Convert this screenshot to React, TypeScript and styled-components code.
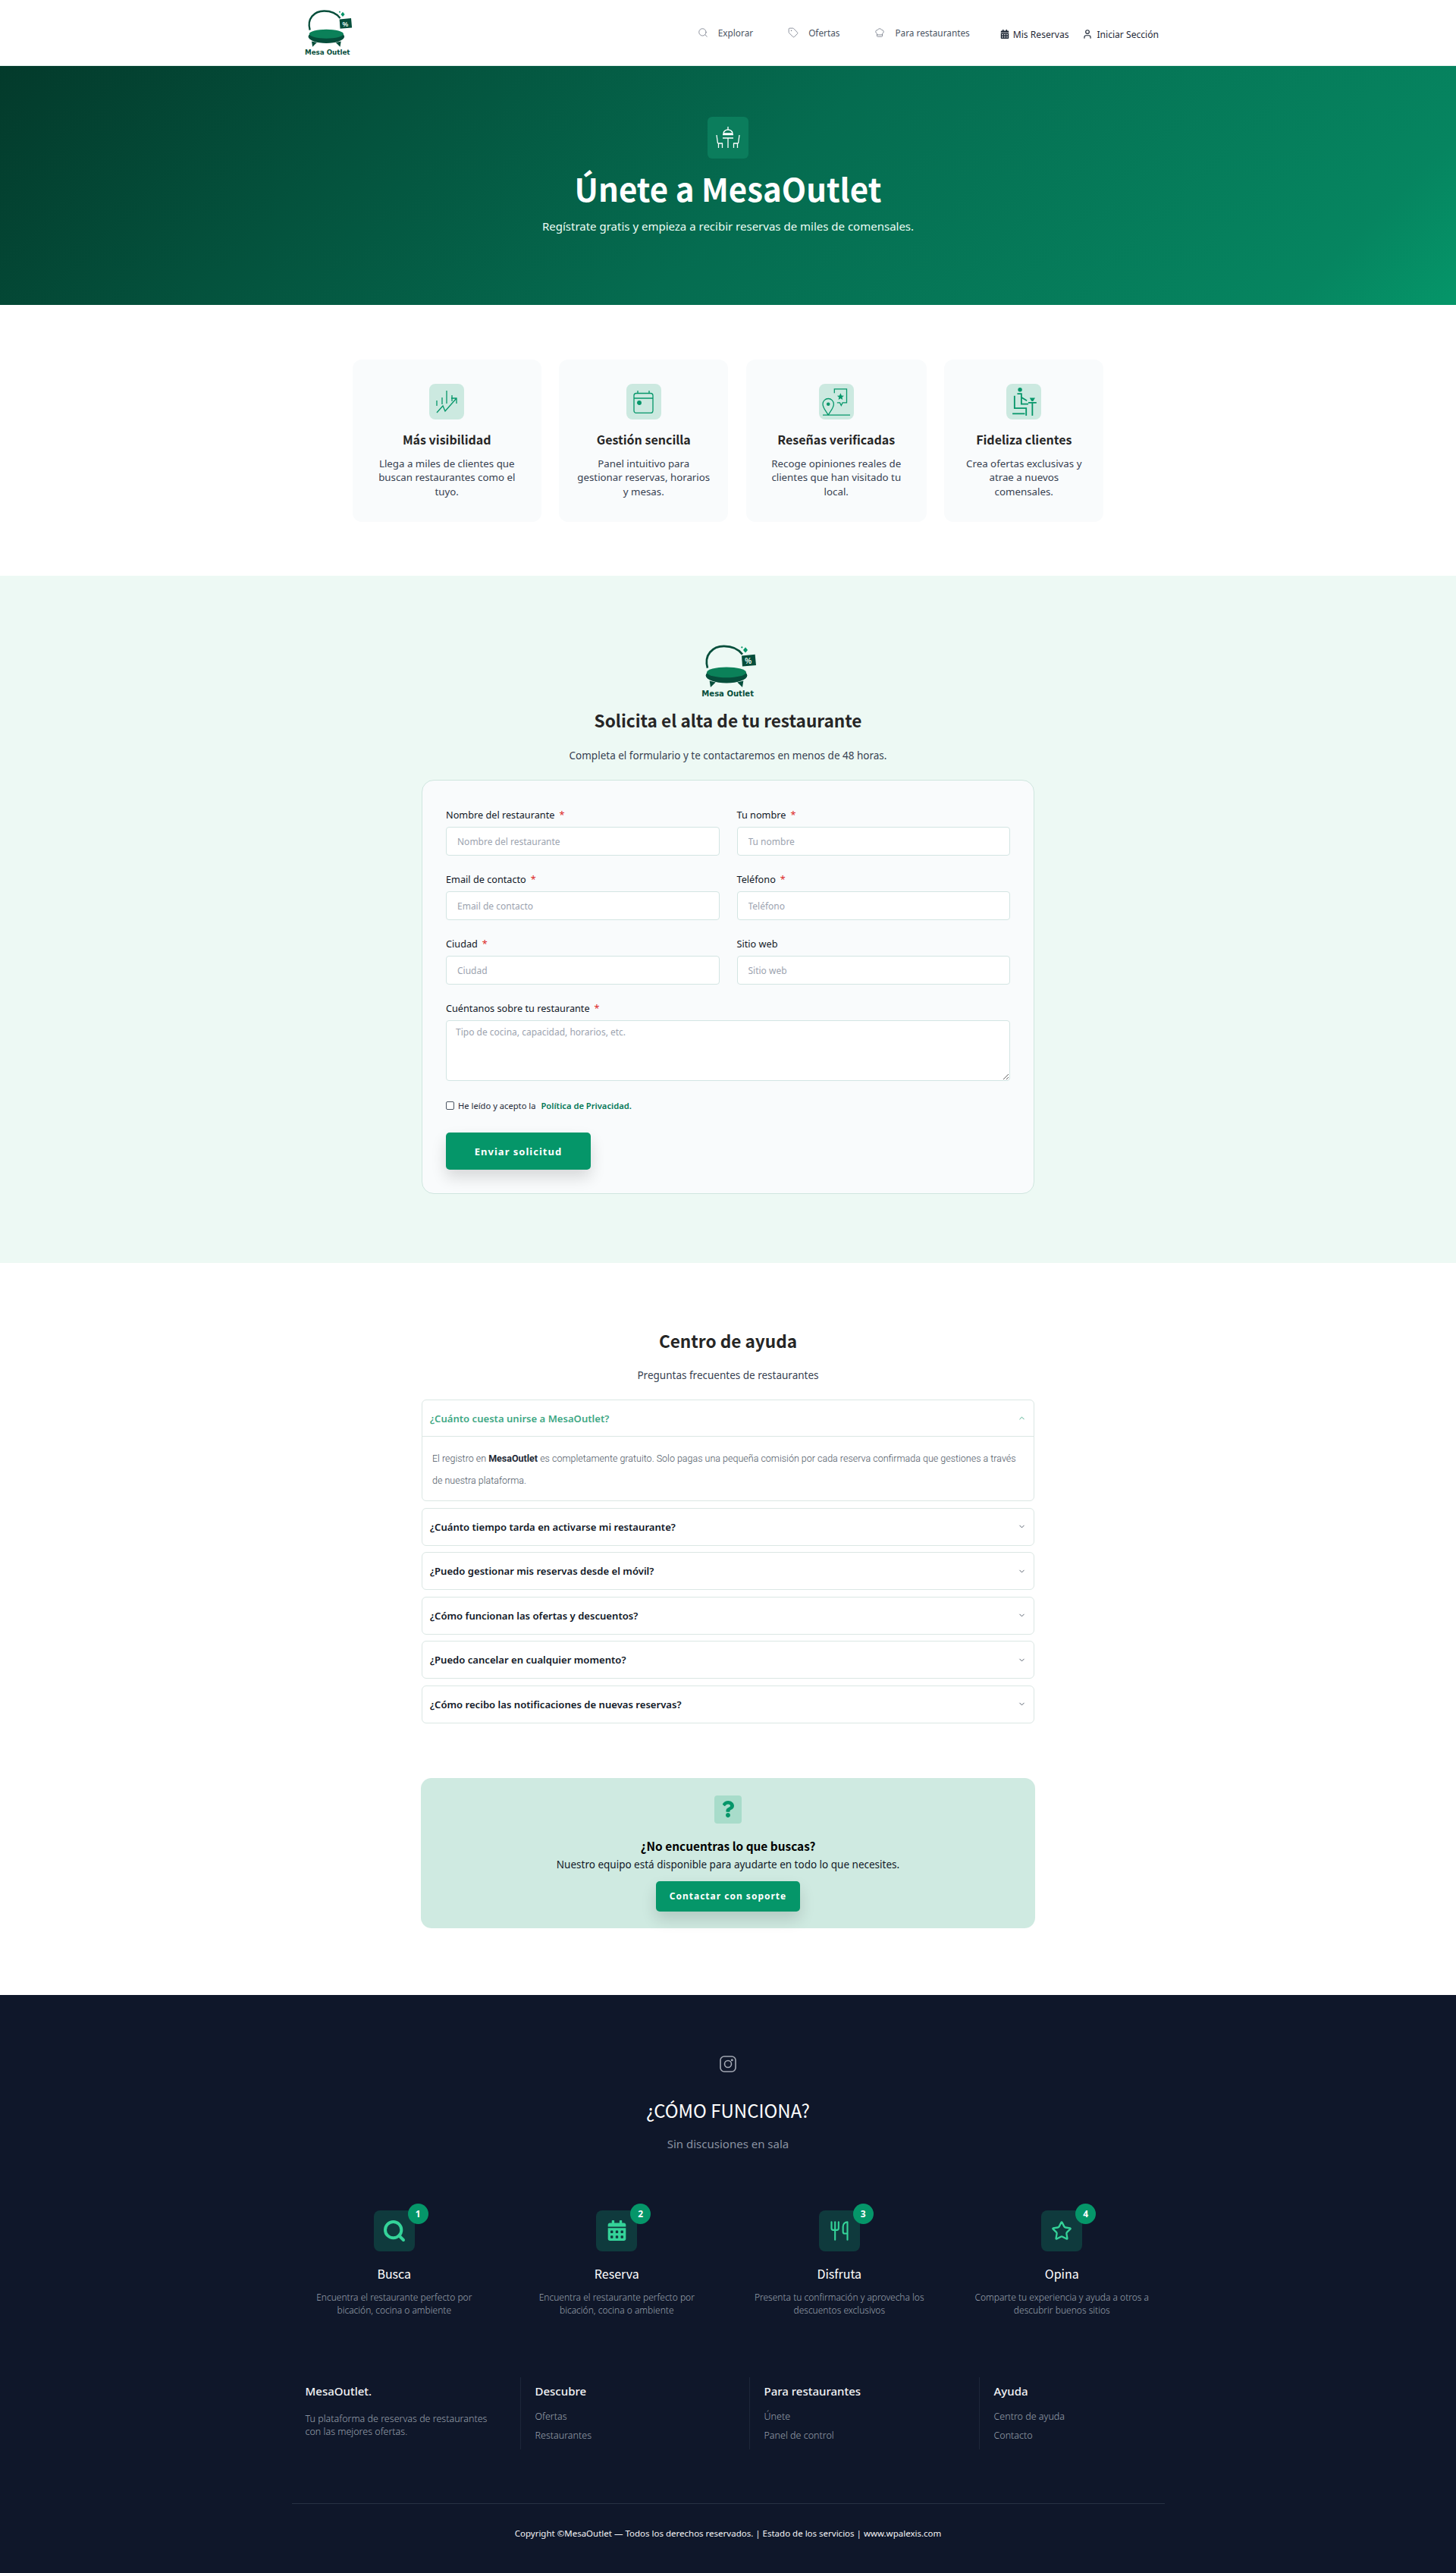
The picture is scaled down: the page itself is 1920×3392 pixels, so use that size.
import styled, { createGlobalStyle } from "styled-components";
import { Search, Tag, ChefHat, User, ChevronDown, ChevronUp, Star, Utensils } from "lucide-react";
import { FaCalendarAlt, FaQuestion } from "react-icons/fa";

const bodyFont = `"Noto Sans", "Open Sans", sans-serif`;
const headFont = `"Noto Sans CJK JP", "Noto Sans", sans-serif`;

const GlobalStyle = createGlobalStyle`
  * { box-sizing: border-box; }
  body { margin: 0; background: #fff; font-family: ${bodyFont}; color: #1f2937; }
`;

const Header = styled.header`
  height: 87px;
  border-bottom: 1px solid #e6f4ef;
  display: flex;
  justify-content: center;
`;
const HeaderInner = styled.div`
  width: 1152px;
  padding: 0 8px 0 16px;
  display: flex;
  align-items: center;
  justify-content: space-between;
`;
const Nav = styled.nav`
  display: flex;
  align-items: center;
`;
const NavLink = styled.a<{ $gap: number }>`
  display: flex;
  align-items: center;
  gap: 13px;
  margin-right: ${(p) => p.$gap}px;
  font-size: 11.8px;
  color: #4b5563;
  svg { color: #6b7280; }
`;
const NavRight = styled.a`
  display: flex;
  align-items: center;
  gap: 5px;
  margin: 4px 18px 0 0;
  font-size: 12.1px;
  color: #1f2937;
  &:last-child { margin-right: 0; }
`;

const Hero = styled.section`
  height: 315px;
  padding-top: 67px;
  background: linear-gradient(135deg, #033a2b 0%, #056c50 52%, #068560 90%, #059669 100%);
  display: flex;
  flex-direction: column;
  align-items: center;
  color: #fff;
`;
const HeroIcon = styled.div`
  width: 54px;
  height: 55px;
  border-radius: 6px;
  background: #0b7d5c;
  display: flex;
  align-items: center;
  justify-content: center;
`;
const HeroTitle = styled.h1`
  margin: 10px 0 0;
  font: 700 42px/58px ${headFont};
`;
const HeroText = styled.p`
  margin: 7px 0 0;
  font: 400 15px/28px ${bodyFont};
  color: #ecfdf5;
`;

const Features = styled.section`
  padding: 72px 0 71px;
  display: flex;
  justify-content: center;
  gap: 23.5px;
`;
const FeatureCard = styled.article<{ $w: number }>`
  width: ${(p) => p.$w}px;
  height: 214px;
  padding: 32px 24px 0;
  border-radius: 12px;
  background: #f9fbfc;
  text-align: center;
`;
const FeatureIcon = styled.div`
  width: 46px;
  height: 47px;
  margin: 0 auto;
  border-radius: 8px;
  background: #cce9e0;
  display: flex;
  align-items: center;
  justify-content: center;
`;
const FeatureTitle = styled.h3`
  margin: 13px 0 0;
  font: 700 16px/26px ${headFont};
  color: #262626;
`;
const FeatureText = styled.p`
  margin: 10px 0 0;
  font: 400 13.3px/18.4px ${bodyFont};
  color: #374151;
`;

const Apply = styled.section`
  padding: 90px 0 91px;
  background: #edf9f4;
  display: flex;
  flex-direction: column;
  align-items: center;
`;
const SectionTitle = styled.h2<{ $top: number }>`
  margin: ${(p) => p.$top}px 0 0;
  font: 700 22.6px/36px ${headFont};
  color: #262626;
`;
const SectionText = styled.p<{ $top: number }>`
  margin: ${(p) => p.$top}px 0 0;
  font: 400 13.5px/24px ${bodyFont};
  color: #374151;
`;
const FormCard = styled.form`
  width: 808px;
  margin-top: 20px;
  padding: 35px 31px 31px;
  border: 1px solid #cfe6df;
  border-radius: 16px;
  background: #f9fbfc;
`;
const FormGrid = styled.div`
  display: grid;
  grid-template-columns: 1fr 1fr;
  column-gap: 23px;
  row-gap: 21px;
`;
const Field = styled.label<{ $wide?: boolean }>`
  display: block;
  grid-column: ${(p) => (p.$wide ? "1 / -1" : "auto")};
`;
const LabelText = styled.span`
  display: block;
  margin-bottom: 6px;
  font: 400 12.7px/20px ${bodyFont};
  color: #111827;
`;
const Req = styled.span`
  margin-left: 6px;
  color: #dc2626;
`;
const Input = styled.input`
  display: block;
  width: 100%;
  height: 38px;
  padding: 0 14px;
  border: 1px solid #d3e5e3;
  border-radius: 4px;
  background: #fff;
  font: 400 12px ${bodyFont};
  &::placeholder { color: #9ca3af; }
`;
const TextArea = styled.textarea`
  display: block;
  width: 100%;
  height: 80px;
  padding: 6px 12px;
  border: 1px solid #d3e5e3;
  border-radius: 4px;
  background: #fff;
  font: 400 12px/18px ${bodyFont};
  &::placeholder { color: #9ca3af; }
`;
const Consent = styled.div`
  margin-top: 23px;
  height: 20px;
  display: flex;
  align-items: center;
  font: 400 11.2px/20px ${bodyFont};
  color: #1f2937;
`;
const Check = styled.input`
  appearance: none;
  width: 11px;
  height: 11px;
  margin: -2px 5px 0 0;
  border: 1px solid #4b5563;
  border-radius: 2px;
  background: #fff;
`;
const ConsentLink = styled.a`
  margin-left: 7px;
  font-weight: 600;
  color: #047857;
`;
const PrimaryButton = styled.button<{ $w: number; $h: number; $size: number }>`
  display: block;
  width: ${(p) => p.$w}px;
  height: ${(p) => p.$h}px;
  border: 0;
  border-radius: 5px;
  background: #059669;
  color: #fff;
  font: 700 ${(p) => p.$size}px ${bodyFont};
  letter-spacing: 1px;
  box-shadow: 0 10px 20px rgba(0, 0, 0, 0.14);
`;
const SubmitRow = styled.div`
  margin-top: 25px;
`;

const Help = styled.section`
  padding: 85px 0 88px;
  display: flex;
  flex-direction: column;
  align-items: center;
`;
const FaqList = styled.div`
  width: 808px;
  margin-top: 20px;
  display: flex;
  flex-direction: column;
  gap: 8.6px;
`;
const FaqItem = styled.div`
  border: 1px solid #dbe7e4;
  border-radius: 6px;
  background: #fff;
`;
const FaqHead = styled.div<{ $open?: boolean }>`
  height: 48px;
  padding: 0 10px;
  display: flex;
  align-items: center;
  justify-content: space-between;
  font: 600 13.1px ${bodyFont};
  color: ${(p) => (p.$open ? "#3fa885" : "#111827")};
  border-bottom: ${(p) => (p.$open ? "1px solid #dbe7e4" : "0")};
`;
const FaqBody = styled.p`
  margin: 0;
  padding: 14px 12px 12px 13px;
  font: 300 12.5px/29px Roboto, sans-serif;
  color: #4b5563;
  b { font-weight: 700; color: #1f2937; }
`;
const Cta = styled.div`
  width: 810px;
  margin-top: 72px;
  padding: 23px 0 22px;
  border-radius: 14px;
  background: #cfeae1;
  display: flex;
  flex-direction: column;
  align-items: center;
`;
const CtaIcon = styled.div`
  width: 36px;
  height: 37px;
  border-radius: 4px;
  background: #a8dcca;
  display: flex;
  align-items: center;
  justify-content: center;
`;
const CtaTitle = styled.h3`
  margin: 17px 0 0;
  font: 700 15.4px/24px ${headFont};
  color: #000;
`;
const CtaText = styled.p`
  margin: 3px 0 12px;
  font: 400 13.5px/20px ${bodyFont};
  color: #111827;
`;

const Footer = styled.footer`
  background: #0f172a;
  padding-top: 80px;
  height: 763px;
  display: flex;
  flex-direction: column;
  align-items: center;
  color: #fff;
`;
const FootTitle = styled.h2`
  margin: 33px 0 0;
  font: 400 24px/34px ${headFont};
`;
const FootSub = styled.p`
  margin: 15px 0 0;
  font: 400 15px/24px ${bodyFont};
  color: #8b93a1;
`;
const Steps = styled.div`
  width: 1174px;
  margin-top: 76px;
  display: grid;
  grid-template-columns: repeat(4, 1fr);
`;
const Step = styled.div`
  display: flex;
  flex-direction: column;
  align-items: center;
`;
const StepIcon = styled.div`
  position: relative;
  width: 54px;
  height: 54px;
  border-radius: 8px;
  background: #0f3a3d;
  display: flex;
  align-items: center;
  justify-content: center;
  color: #34d399;
`;
const StepBadge = styled.span`
  position: absolute;
  top: -9px;
  right: -18px;
  width: 27px;
  height: 27px;
  border-radius: 50%;
  background: #059669;
  display: flex;
  align-items: center;
  justify-content: center;
  font: 700 12px ${bodyFont};
  color: #fff;
`;
const StepTitle = styled.h4`
  margin: 17px 0 0;
  font: 400 16px/24px ${headFont};
`;
const StepText = styled.p`
  width: 240px;
  margin: 11px 0 0;
  font: 300 12px/17px ${bodyFont};
  text-align: center;
  color: #9ca3af;
`;
const Columns = styled.div`
  width: 1151px;
  margin-top: 80px;
  display: grid;
  grid-template-columns: 301px 302px 303px 245px;
`;
const Col = styled.div`
  height: 95px;
  padding: 8px 0 0 19px;
  border-left: 1px solid #1c2639;
  &:first-child { padding: 8px 30px 0 18px; border-left: 0; }
`;
const ColTitle = styled.h5`
  margin: 0 0 15px;
  font: 500 15px/20px ${bodyFont};
  color: #f3f4f6;
`;
const ColText = styled.p`
  margin: 18px 0 0;
  font: 300 12.5px/17px ${bodyFont};
  color: #9ca3af;
`;
const ColLink = styled.a`
  display: block;
  margin-bottom: 8px;
  font: 300 12.5px/17px ${bodyFont};
  color: #9ca3af;
`;
const Divider = styled.hr`
  width: 1151px;
  margin: 71px 0 0;
  border: 0;
  border-top: 1px solid #273244;
`;
const Copyright = styled.p`
  margin: 29px 0 0;
  font: 400 11.5px/20px ${bodyFont};
  color: #f3f4f6;
`;

function Logo({ width, height }: { width: number; height: number }) {
  return (
    <svg width={width} height={height} viewBox="130 70 225 200" preserveAspectRatio="none">
      <path d="M160 158C145 110 180 78 225 78C260 78 285 92 298 108" fill="none" stroke="#064e3b" strokeWidth="8" />
      <path d="M295 113L348 108L352 148L298 152z" fill="#064e3b" />
      <text x="308" y="143" fontSize="30" fontWeight="700" fontFamily="Liberation Sans, sans-serif" fill="#ecfdf5">%</text>
      <path d="M310 82l9 10-9 10-9-10zM296 78l4 4-4 4-4-4z" fill="#059669" />
      <ellipse cx="235" cy="185" rx="82" ry="28" fill="#064e3b" />
      <path d="M168 205L172 228L192 210zM302 205L298 228L278 210z" fill="#064e3b" />
      <ellipse cx="235" cy="174" rx="78" ry="19" fill="#0b8159" />
      <text x="137" y="262" fontSize="30" fontWeight="700" fontFamily="DejaVu Sans, sans-serif" fill="#064e3b" textLength="206" lengthAdjust="spacingAndGlyphs">Mesa Outlet</text>
    </svg>
  );
}

function DiningIcon() {
  return (
    <svg width="32" height="29" viewBox="0 0 32 29" fill="none" stroke="#fff" strokeWidth="1.300">
      <path d="M16 0v4M10 9c0-3 3-5 6-5s6 2 6 5zM9 10.500h14" />
      <path d="M1 11l1.500 11M2.500 22H9M3.500 22v6M8.500 22v6M9 15H23M16 15v13" />
      <path d="M31 11l-1.500 11M29.500 22H23M28.500 22v6M23.500 22v6" />
    </svg>
  );
}
function ChartIcon() {
  return (
    <svg width="30" height="30" viewBox="0 0 30 30" fill="none" stroke="#059669" strokeWidth="1.300">
      <path d="M2 13v7M9 9v9M15 0v17M22 6v8" />
      <path d="M2 29l8-9 3 7 15-17M21 10h7v7" />
    </svg>
  );
}
function CalIcon() {
  return (
    <svg width="27" height="30" viewBox="0 0 27 30" fill="none" stroke="#059669" strokeWidth="1.300">
      <rect x="1" y="3.500" width="25" height="26" rx="3" />
      <path d="M1 10h25M6 0v3.500M21 0v3.500" />
      <circle cx="8" cy="16" r="2.300" fill="#059669" />
    </svg>
  );
}
function ReviewIcon() {
  return (
    <svg width="38" height="36" viewBox="0 0 42 40" fill="none" stroke="#059669" strokeWidth="1.400">
      <path d="M9 39C4 31 1 28 1 23a8 8 0 0 1 16 0c0 5-3 8-8 16zM1 39h40" />
      <circle cx="9" cy="23" r="1.800" fill="#059669" />
      <path d="M18 7V1h18v20H30l-2 4-2-4h-4" />
      <path d="M27 7l1.500 3.500 3.500.3-2.700 2.300.8 3.500-3.100-1.900-3.100 1.900.8-3.500-2.700-2.300 3.500-.3z" fill="#059669" stroke="none" />
    </svg>
  );
}
function DinerIcon() {
  return (
    <svg width="35" height="38" viewBox="0 0 38 42" fill="none" stroke="#059669" strokeWidth="2">
      <circle cx="13" cy="3" r="3" fill="#059669" stroke="none" />
      <path d="M9 9h6v15h10M15 14l8 5M5 12v18h17v11M2 38h18M37 22H25M31 22v19" />
      <path d="M27 15h8l-3 5h-2z" fill="#059669" stroke="none" />
    </svg>
  );
}
function InstagramIcon() {
  return (
    <svg width="22" height="22" viewBox="0 0 22 22" fill="none" stroke="#a3a8b3" strokeWidth="1.600">
      <rect x="1" y="1" width="20" height="20" rx="5" />
      <circle cx="11" cy="11" r="4.500" />
      <circle cx="16.300" cy="5.700" r="0.700" />
    </svg>
  );
}

const features = [
  { w: 249, icon: <ChartIcon />, title: "Más visibilidad", text: "Llega a miles de clientes que buscan restaurantes como el tuyo." },
  { w: 223, icon: <CalIcon />, title: "Gestión sencilla", text: "Panel intuitivo para gestionar reservas, horarios y mesas." },
  { w: 238, icon: <ReviewIcon />, title: "Reseñas verificadas", text: "Recoge opiniones reales de clientes que han visitado tu local." },
  { w: 210, icon: <DinerIcon />, title: "Fideliza clientes", text: "Crea ofertas exclusivas y atrae a nuevos comensales." },
];

const fields = [
  { label: "Nombre del restaurante", req: true },
  { label: "Tu nombre", req: true },
  { label: "Email de contacto", req: true },
  { label: "Teléfono", req: true },
  { label: "Ciudad", req: true },
  { label: "Sitio web", req: false },
];

const questions = [
  "¿Cuánto tiempo tarda en activarse mi restaurante?",
  "¿Puedo gestionar mis reservas desde el móvil?",
  "¿Cómo funcionan las ofertas y descuentos?",
  "¿Puedo cancelar en cualquier momento?",
  "¿Cómo recibo las notificaciones de nuevas reservas?",
];

const steps = [
  { icon: <Search size={32} strokeWidth={3} />, title: "Busca", text: "Encuentra el restaurante perfecto por bicación, cocina o ambiente" },
  { icon: <FaCalendarAlt size={27} />, title: "Reserva", text: "Encuentra el restaurante perfecto por bicación, cocina o ambiente" },
  { icon: <Utensils size={28} strokeWidth={1.800} />, title: "Disfruta", text: "Presenta tu confirmación y aprovecha los descuentos exclusivos" },
  { icon: <Star size={28} strokeWidth={2} />, title: "Opina", text: "Comparte tu experiencia y ayuda a otros a descubrir buenos sitios" },
];

const footerCols = [
  { title: "Descubre", links: ["Ofertas", "Restaurantes"] },
  { title: "Para restaurantes", links: ["Únete", "Panel de control"] },
  { title: "Ayuda", links: ["Centro de ayuda", "Contacto"] },
];

export default function App() {
  return (
    <>
      <GlobalStyle />
      <Header>
        <HeaderInner>
          <Logo width={65} height={63} />
          <Nav>
            <NavLink $gap={46}><Search size={14} strokeWidth={1.300} />Explorar</NavLink>
            <NavLink $gap={46}><Tag size={14} strokeWidth={1.300} />Ofertas</NavLink>
            <NavLink $gap={40}><ChefHat size={14} strokeWidth={1.300} />Para restaurantes</NavLink>
            <NavRight><FaCalendarAlt size={12} />Mis Reservas</NavRight>
            <NavRight><User size={14} />Iniciar Sección</NavRight>
          </Nav>
        </HeaderInner>
      </Header>

      <Hero>
        <HeroIcon><DiningIcon /></HeroIcon>
        <HeroTitle>Únete a MesaOutlet</HeroTitle>
        <HeroText>Regístrate gratis y empieza a recibir reservas de miles de comensales.</HeroText>
      </Hero>

      <Features>
        {features.map((f) => (
          <FeatureCard key={f.title} $w={f.w}>
            <FeatureIcon>{f.icon}</FeatureIcon>
            <FeatureTitle>{f.title}</FeatureTitle>
            <FeatureText>{f.text}</FeatureText>
          </FeatureCard>
        ))}
      </Features>

      <Apply>
        <Logo width={75} height={72} />
        <SectionTitle $top={11}>Solicita el alta de tu restaurante</SectionTitle>
        <SectionText $top={16}>Completa el formulario y te contactaremos en menos de 48 horas.</SectionText>
        <FormCard>
          <FormGrid>
            {fields.map((f) => (
              <Field key={f.label}>
                <LabelText>{f.label}{f.req && <Req>*</Req>}</LabelText>
                <Input placeholder={f.label} />
              </Field>
            ))}
            <Field $wide>
              <LabelText>Cuéntanos sobre tu restaurante<Req>*</Req></LabelText>
              <TextArea placeholder="Tipo de cocina, capacidad, horarios, etc." />
            </Field>
          </FormGrid>
          <Consent>
            <Check type="checkbox" />He leído y acepto la<ConsentLink>Política de Privacidad.</ConsentLink>
          </Consent>
          <SubmitRow>
            <PrimaryButton type="button" $w={191} $h={49} $size={13}>Enviar solicitud</PrimaryButton>
          </SubmitRow>
        </FormCard>
      </Apply>

      <Help>
        <SectionTitle $top={0}>Centro de ayuda</SectionTitle>
        <SectionText $top={15}>Preguntas frecuentes de restaurantes</SectionText>
        <FaqList>
          <FaqItem>
            <FaqHead $open>¿Cuánto cuesta unirse a MesaOutlet?<ChevronUp size={11} /></FaqHead>
            <FaqBody>
              El registro en <b>MesaOutlet</b> es completamente gratuito. Solo pagas una pequeña comisión por cada reserva confirmada que gestiones a través de nuestra plataforma.
            </FaqBody>
          </FaqItem>
          {questions.map((q) => (
            <FaqItem key={q}>
              <FaqHead>{q}<ChevronDown size={11} color="#4b5563" /></FaqHead>
            </FaqItem>
          ))}
        </FaqList>
        <Cta>
          <CtaIcon><FaQuestion size={22} color="#059669" /></CtaIcon>
          <CtaTitle>¿No encuentras lo que buscas?</CtaTitle>
          <CtaText>Nuestro equipo está disponible para ayudarte en todo lo que necesites.</CtaText>
          <PrimaryButton type="button" $w={190} $h={40} $size={12}>Contactar con soporte</PrimaryButton>
        </Cta>
      </Help>

      <Footer>
        <InstagramIcon />
        <FootTitle>¿CÓMO FUNCIONA?</FootTitle>
        <FootSub>Sin discusiones en sala</FootSub>
        <Steps>
          {steps.map((s, i) => (
            <Step key={s.title}>
              <StepIcon>{s.icon}<StepBadge>{i + 1}</StepBadge></StepIcon>
              <StepTitle>{s.title}</StepTitle>
              <StepText>{s.text}</StepText>
            </Step>
          ))}
        </Steps>
        <Columns>
          <Col>
            <ColTitle>MesaOutlet.</ColTitle>
            <ColText>Tu plataforma de reservas de restaurantes con las mejores ofertas.</ColText>
          </Col>
          {footerCols.map((c) => (
            <Col key={c.title}>
              <ColTitle>{c.title}</ColTitle>
              {c.links.map((l) => <ColLink key={l}>{l}</ColLink>)}
            </Col>
          ))}
        </Columns>
        <Divider />
        <Copyright>Copyright ©MesaOutlet — Todos los derechos reservados. | Estado de los servicios | www.wpalexis.com</Copyright>
      </Footer>
    </>
  );
}
